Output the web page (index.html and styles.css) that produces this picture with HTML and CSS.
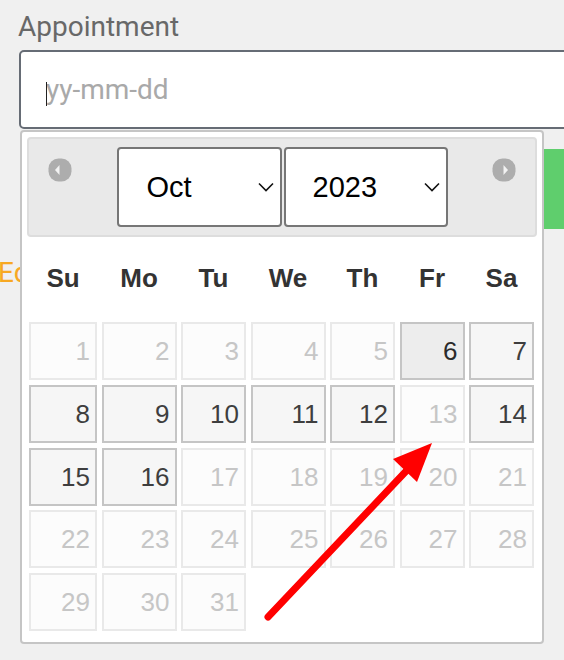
FILE: index.html
```html
<!DOCTYPE html>
<html lang="en">
<head>
  <meta charset="UTF-8">
  <meta name="viewport" content="width=device-width, initial-scale=1.0">
  <title>Book an appointment</title>
  <link rel="stylesheet" href="styles.css">
</head>
<body>
  <div class="booking">
    <label class="field-label" for="appointment">Appointment</label>
    <div class="date-field">
      <input id="appointment" class="date-input" type="text" placeholder="yy-mm-dd">
      <span class="caret"></span>
    </div>

    <div class="form-actions">
      <button class="btn-save" type="button">Save</button>
    </div>
    <a class="link-edit" href="#">Edit</a>

    <!-- datepicker popup -->
    <div class="datepicker">
      <div class="dp-header">
        <a class="dp-nav" href="#" title="Prev">
          <svg width="24" height="24" viewBox="0 0 24 24"><rect x="0.5" y="0.5" width="23" height="23" rx="10" fill="#adadad"/><polygon points="7,12 11.5,7 11.5,17" fill="#f2f2f2"/></svg>
        </a>
        <div class="dp-title">
          <div class="select-wrap">
            <select class="dp-select dp-month">
              <option>Oct</option>
            </select>
            <svg class="chevron" width="16" height="10" viewBox="0 0 16 10"><path d="M1 1.5 L8 8.5 L15 1.5" fill="none" stroke="#111" stroke-width="1.6"/></svg>
          </div>
          <div class="select-wrap">
            <select class="dp-select dp-year">
              <option>2023</option>
            </select>
            <svg class="chevron" width="16" height="10" viewBox="0 0 16 10"><path d="M1 1.5 L8 8.5 L15 1.5" fill="none" stroke="#111" stroke-width="1.6"/></svg>
          </div>
        </div>
        <a class="dp-nav" href="#" title="Next">
          <svg width="24" height="24" viewBox="0 0 24 24"><rect x="0.5" y="0.5" width="23" height="23" rx="10" fill="#adadad"/><polygon points="16,12 11.5,7 11.5,17" fill="#f2f2f2"/></svg>
        </a>
      </div>

      <div class="dp-weekdays">
        <span>Su</span><span>Mo</span><span>Tu</span><span>We</span><span>Th</span><span>Fr</span><span>Sa</span>
      </div>
      <div class="dp-days" id="dp-days"></div>
    </div>

    <!-- pointer drawn over the calendar -->
    <svg class="annotation" width="564" height="660" viewBox="0 0 564 660">
      <line x1="268" y1="617" x2="410" y2="467" stroke="#ff0000" stroke-width="7" stroke-linecap="round"/>
      <polygon points="432,443 393,459 417,482" fill="#ff0000"/>
    </svg>
  </div>

  <script>
    // October 2023 starts on a Sunday; only a few days are bookable
    const open = [6, 7, 8, 9, 10, 11, 12, 14, 15, 16];
    const grid = document.getElementById("dp-days");

    for (let day = 1; day <= 31; day++) {
      const cell = document.createElement("span");
      cell.className = "dp-day";
      cell.textContent = day;
      if (!open.includes(day)) cell.classList.add("is-disabled");
      if (day === 6) cell.classList.add("is-hover");
      grid.appendChild(cell);
    }
  </script>
</body>
</html>
```

FILE: styles.css
```css
html, body {
  overflow: hidden;
}

body {
  margin: 0;
  padding: 0;
  background-color: #f0f0f0;
  font-family: Roboto, "Liberation Sans", sans-serif;
}

.booking {
  position: relative;
  height: 660px;
  padding: 10px 0 0 19px;
  box-sizing: border-box;
}

.field-label {
  display: block;
  margin-left: -1px;
  font-size: 28px;
  color: #686868;
}

.date-field {
  position: relative;
  margin-top: 7px;
}

.date-input {
  display: block;
  width: 640px;
  height: 79px;
  box-sizing: border-box;
  padding: 0 0 0 25px;
  border: 2px solid #666c75;
  border-radius: 5px;
  background-color: #fff;
  font-family: Roboto, sans-serif;
  font-size: 28px;
  color: #333;
  outline: none;
}

.date-input::placeholder {
  color: #a9a9a9;
}

.caret {
  position: absolute;
  left: 27px;
  top: 32px;
  width: 1px;
  height: 24px;
  background-color: #222;
}

.form-actions {
  margin-top: 20px;
  padding-left: 160px;
}

.btn-save {
  display: block;
  width: 480px;
  height: 80px;
  border: none;
  border-radius: 4px;
  background-color: #5fce6d;
  color: #fff;
  font-size: 28px;
}

.link-edit {
  display: block;
  margin: 27px 0 0 -21px;
  font-size: 28px;
  color: #f7a823;
  text-decoration: none;
}

/* datepicker */
.datepicker {
  position: absolute;
  top: 130px;
  left: 20px;
  width: 524px;
  box-sizing: border-box;
  padding: 5px 5px 11px;
  background-color: #fff;
  border: 2px solid #c5c5c5;
  border-radius: 4px;
  font-family: "Liberation Sans", Arial, sans-serif;
}

.dp-header {
  display: flex;
  align-items: flex-start;
  height: 100px;
  box-sizing: border-box;
  padding: 0 19px;
  background-color: #e9e9e9;
  border: 2px solid #dddddd;
  border-radius: 4px;
}

.dp-nav {
  display: block;
  width: 24px;
  height: 24px;
  margin-top: 19px;
  filter: blur(0.7px);
}

.dp-nav svg {
  display: block;
}

.dp-title {
  flex: 1;
  display: flex;
  justify-content: center;
  gap: 2px;
  margin-top: 8px;
}

.select-wrap {
  position: relative;
}

.dp-select {
  display: block;
  height: 80px;
  box-sizing: border-box;
  border: 2px solid #767676;
  border-radius: 4px;
  background-color: #fff;
  font-family: "Liberation Sans", Arial, sans-serif;
  font-size: 29px;
  color: #000;
  appearance: none;
  -webkit-appearance: none;
  outline: none;
}

.dp-month {
  width: 165px;
  padding: 0 0 0 28px;
}

.dp-year {
  width: 164px;
  padding: 0 0 0 27px;
}

.chevron {
  position: absolute;
  top: 35px;
  right: 8px;
  pointer-events: none;
}

.dp-weekdays,
.dp-days {
  display: grid;
  grid-template-columns: 68px 75px 65px 75px 65px 65px 65px;
  column-gap: 4.5px;
  margin-left: 2px;
}

.dp-weekdays {
  height: 82px;
  align-items: center;
  text-align: center;
  font-size: 26px;
  font-weight: bold;
  color: #333;
}

.dp-days {
  margin-top: 3px;
  grid-auto-rows: 58px;
  row-gap: 4.75px;
}

.dp-day {
  box-sizing: border-box;
  padding-right: 5px;
  border: 2px solid #c5c5c5;
  background-color: #f6f6f6;
  text-align: right;
  font-size: 26px;
  line-height: 54px;
  color: #3e3e3e;
}

.dp-day.is-hover {
  background-color: #ededed;
  color: #2b2b2b;
}

.dp-day.is-disabled {
  border-color: #e9e9e9;
  background-color: #fcfcfc;
  color: #c6c6c6;
}

.annotation {
  position: absolute;
  top: 0;
  left: 0;
  pointer-events: none;
}
```
